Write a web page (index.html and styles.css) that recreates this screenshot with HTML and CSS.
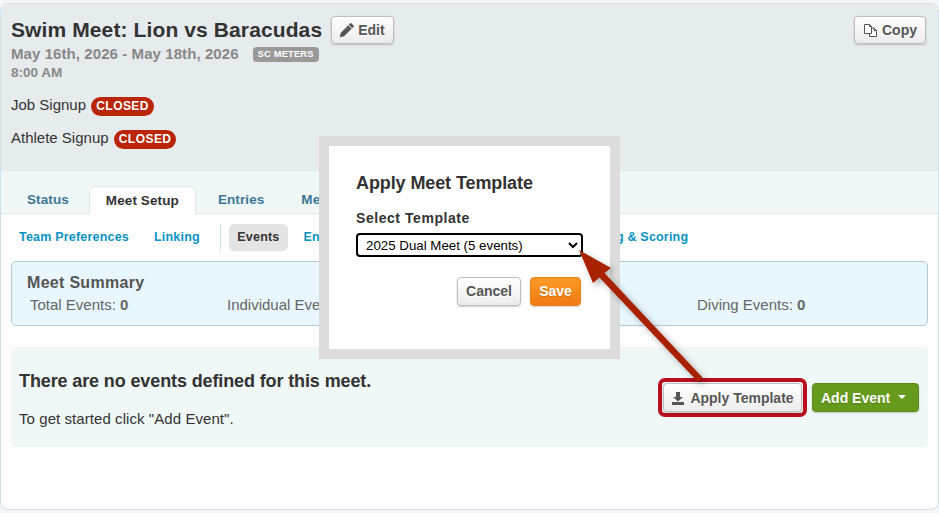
FILE: index.html
```html
<!DOCTYPE html>
<html lang="en">
<head>
<meta charset="utf-8">
<title>Swim Meet</title>
<link rel="stylesheet" href="styles.css">
</head>
<body>
<div class="card">
  <header class="meet-head">
    <div class="meet-info">
      <div class="title-row">
        <h1 class="meet-title">Swim Meet: Lion vs Baracudas</h1>
        <button class="btn btn-light btn-head btn-edit">
          <svg class="ic" width="16" height="16" viewBox="0 0 16 16"><path d="M11.8 1l3.200 3.200-1.800 1.800-3.200-3.200zM9.200 3.600l3.200 3.200-7.300 7.300-4.100.9.900-4.100zM2.800 11.200l2 2" fill="#555" stroke="#555" stroke-width=".4"/></svg>Edit
        </button>
      </div>
      <div class="meet-date">May 16th, 2026 - May 18th, 2026<span class="course">SC METERS</span></div>
      <div class="meet-time">8:00 AM</div>
      <div class="signup signup-first">Job Signup <span class="closed">CLOSED</span></div>
      <div class="signup">Athlete Signup <span class="closed">CLOSED</span></div>
    </div>
    <button class="btn btn-light btn-head btn-copy">
      <svg class="ic" width="15" height="15" viewBox="0 0 15 15"><path d="M1.500 1.500h5l2 2v7h-7zM6.500 1.500v2h2M8.500 5h2.500l2.500 2.500v6h-7v-3M11 5v2.500h2.500" fill="#fff" stroke="#555" stroke-width="1"/></svg>Copy
    </button>
  </header>
  <nav class="tabs">
    <a class="tab">Status</a>
    <a class="tab tab-active">Meet Setup</a>
    <a class="tab">Entries</a>
    <a class="tab">Meet Results</a>
  </nav>
  <main class="content">
    <nav class="subnav">
      <a class="sub">Team Preferences</a>
      <a class="sub">Linking</a>
      <span class="sub-div"></span>
      <a class="sub sub-active">Events</a>
      <a class="sub">Entry Rules</a>
      <a class="sub">Lane &amp; Seeding</a>
      <a class="sub">Heats</a>
      <a class="sub">Timing &amp; Scoring</a>
    </nav>
    <section class="summary">
      <h2 class="summary-title">Meet Summary</h2>
      <div class="stats">
        <div>Total Events: <b>0</b></div>
        <div>Individual Events: <b>0</b></div>
        <div></div>
        <div>Diving Events: <b>0</b></div>
      </div>
    </section>
    <section class="events">
      <div class="events-text">
        <h3 class="events-title">There are no events defined for this meet.</h3>
        <p class="events-hint">To get started click "Add Event".</p>
      </div>
      <div class="events-actions">
        <span class="callout">
          <button class="btn btn-light btn-apply">
            <svg class="ic" width="14" height="14" viewBox="0 0 14 14"><path d="M5 1h4v5h3L7 10.500 2 6h3zM1 11h12v3H1z" fill="#555"/></svg>Apply Template
          </button>
        </span>
        <button class="btn btn-green">Add Event<span class="caret"></span></button>
      </div>
    </section>
  </main>
</div>

<div class="modal">
  <h2 class="modal-title">Apply Meet Template</h2>
  <label class="modal-label" for="tpl">Select Template</label>
  <select class="modal-select" id="tpl"><option>2025 Dual Meet (5 events)</option></select>
  <div class="modal-actions">
    <button class="btn btn-light btn-cancel">Cancel</button>
    <button class="btn btn-orange">Save</button>
  </div>
</div>

<svg class="arrow" width="939" height="513" viewBox="0 0 939 513">
  <defs><filter id="sh" x="-20%" y="-20%" width="140%" height="140%"><feDropShadow dx="3" dy="3" stdDeviation="3" flood-color="#000" flood-opacity=".3"/></filter></defs>
  <polygon points="579,250 611,268 604.500,273 702.500,377.500 697.500,381.500 599.500,277.500 593,283" fill="#a82400" filter="url(#sh)"/>
</svg>
</body>
</html>
```
FILE: styles.css
```css
* { box-sizing: border-box; }
html, body { margin: 0; padding: 0; }
body {
  width: 939px;
  height: 513px;
  overflow: hidden;
  background: #f4f6f7;
  font-family: "Liberation Sans", Arial, sans-serif;
  color: #333;
  position: relative;
}
h1, h2, h3, p { margin: 0; }

.card {
  margin-top: 3px;
  height: 507px;
  border: 1px solid #d3e0e8;
  border-radius: 8px;
  background: #fdfdfd;
  overflow: hidden;
  display: flex;
  flex-direction: column;
}

.meet-head {
  height: 167px;
  flex: none;
  background: #e6ebee;
  padding: 11px 12px 0 10px;
  display: flex;
  justify-content: space-between;
  align-items: flex-start;
}
.title-row { display: flex; align-items: flex-start; gap: 9px; height: 29px; }
.meet-title { font-size: 21px; font-weight: 700; letter-spacing: .11px; color: #333; line-height: 29px; }
.meet-date { font-size: 15px; font-weight: 700; color: #888; letter-spacing: .08px; line-height: 18px; margin-top: 1px; display: flex; align-items: center; }
.course {
  background: #999;
  color: #fff;
  font-size: 9.300px;
  line-height: 15px;
  height: 15px;
  padding: 0 5px;
  border-radius: 4px;
  margin-left: 14px;
  letter-spacing: .2px;
}
.meet-time { font-size: 13.500px; font-weight: 700; color: #888; line-height: 18px; margin-top: 1px; }
.signup { font-size: 15px; line-height: 20px; margin-top: 12px; color: #333; }
.signup-first { margin-top: 13px; }
.closed {
  display: inline-block;
  background: #b92506;
  color: #fff;
  font-weight: 700;
  font-size: 12px;
  line-height: 19px;
  height: 19px;
  padding: 0 5px;
  margin-left: 1px;
  border-radius: 10px;
  letter-spacing: .45px;
}

.btn {
  font-family: inherit;
  font-weight: 700;
  font-size: 14px;
  border-radius: 4px;
  display: inline-flex;
  align-items: center;
  justify-content: center;
  padding: 0;
  cursor: pointer;
}
.btn-light {
  color: #555;
  background: linear-gradient(#ffffff, #ececec);
  border: 1px solid #bdbdbd;
  box-shadow: 0 1px 2px rgba(0,0,0,.2);
  text-shadow: 0 1px 0 #fff;
}
.btn-head { height: 28px; margin-top: 1px; gap: 4px; }
.btn-edit { padding: 0 8px 0 7px; gap: 3px; }
.btn-copy { padding: 0 8px; }
.ic { flex: none; }

.tabs {
  height: 43px;
  flex: none;
  background: #eff7f7;
  border-bottom: 1px solid #dfe7ea;
  display: flex;
  align-items: flex-end;
  padding-left: 10px;
  font-size: 13.500px;
  font-weight: 700;
  letter-spacing: .1px;
}
.tab { height: 28px; padding: 0 16px; line-height: 27px; color: #3e7795; margin: 0 5px -1px 0; }
.tab-active {
  background: #fdfdfd;
  color: #333;
  border: 1px solid #dfe7ea;
  border-bottom: 0;
  border-radius: 6px 6px 0 0;
  margin: 0 6px -1px -1px;
}

.content { flex: 1; padding: 10px 10px 0 10px; }
.subnav { display: flex; align-items: center; height: 27px; font-size: 12.500px; font-weight: 700; letter-spacing: .2px; }
.sub { color: #0a94c4; padding: 0 8px; margin-right: 9px; line-height: 27px; white-space: nowrap; }
.sub-div { width: 1px; height: 27px; background: #cfe0ee; margin: 0 8px 0 3px; }
.sub-active { background: #e4e4e4; color: #333; border-radius: 5px; padding: 0 8.500px; margin-right: 7.500px; }

.summary {
  margin-top: 10px;
  height: 65px;
  background: #e8f7fe;
  border: 1px solid #b5c8d6;
  border-radius: 5px;
  padding: 11px 15px 0;
}
.summary-title { font-size: 16px; font-weight: 700; color: #555; line-height: 20px; letter-spacing: .3px; }
.stats { display: grid; grid-template-columns: 197px 235px 235px auto; padding-left: 3px; font-size: 15px; color: #666; line-height: 16px; margin-top: 4px; }

.events {
  margin-top: 21px;
  height: 100px;
  background: #eff7f7;
  border-radius: 5px;
  padding: 0 9px 0 8px;
  display: flex;
  justify-content: space-between;
  align-items: flex-start;
}
.events-title { font-size: 18px; font-weight: 700; color: #333; line-height: 22px; margin-top: 23px; letter-spacing: -.12px; }
.events-hint { font-size: 15px; line-height: 18px; margin-top: 18px; color: #333; letter-spacing: .07px; }
.events-actions { display: flex; align-items: center; gap: 5px; margin-top: 31px; }
.callout { display: block; border: 4px solid #b80d1e; border-radius: 7px; padding: 1px; height: 39px; }
.btn-apply { height: 29px; width: 139px; gap: 5px; }
.btn-green {
  height: 29px;
  width: 107px;
  justify-content: flex-start;
  padding-left: 8px;
  color: #fff;
  background: #669a1c;
  border: 1px solid #5c8b18;
  box-shadow: 0 1px 2px rgba(0,0,0,.2);
  text-shadow: 0 1px 1px rgba(0,0,0,.2);
}
.caret { border: 4px solid transparent; border-top-color: #fff; border-bottom: 0; margin-left: 8px; margin-top: -2px; }

.modal {
  position: absolute;
  left: 319px;
  top: 136px;
  width: 301px;
  height: 223px;
  background: #fff;
  border: 10px solid #dcdcdc;
  padding: 26px 27px 0;
}
.modal-title { font-size: 18px; font-weight: 700; color: #333; line-height: 22px; letter-spacing: -.1px; }
.modal-label { display: block; font-size: 14px; font-weight: 700; color: #333; line-height: 18px; margin-top: 15px; letter-spacing: .55px; }
.modal-select {
  display: block;
  width: 227px;
  height: 24px;
  margin-top: 6px;
  font-family: inherit;
  font-size: 13.300px;
  color: #000;
  background: #fff;
  border: 2px solid #000;
  border-radius: 4px;
  padding-left: 4px;
}
.modal-actions { display: flex; justify-content: flex-end; gap: 9px; margin-top: 20px; padding-right: 2px; }
.btn-cancel { width: 64px; height: 29px; padding-bottom: 1px; }
.btn-orange {
  width: 51px;
  height: 29px;
  padding-bottom: 1px;
  color: #fff;
  background: linear-gradient(#fb9a26, #f17a12);
  border: 1px solid #e7831c;
  box-shadow: 0 1px 2px rgba(0,0,0,.2);
  text-shadow: 0 1px 1px rgba(0,0,0,.2);
}

.arrow { position: absolute; left: 0; top: 0; pointer-events: none; }
```
